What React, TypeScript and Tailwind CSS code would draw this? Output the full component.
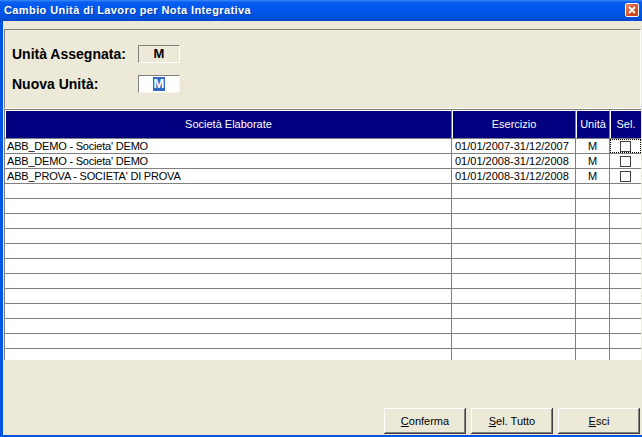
import React from 'react';

const rows = [
  { soc: "ABB_DEMO - Societa' DEMO", es: '01/01/2007-31/12/2007', un: 'M' },
  { soc: "ABB_DEMO - Societa' DEMO", es: '01/01/2008-31/12/2008', un: 'M' },
  { soc: "ABB_PROVA - SOCIETA' DI PROVA", es: '01/01/2008-31/12/2008', un: 'M' },
];

const emptyRows = Array.from({ length: 12 });

const Btn = ({ first, rest }: { first: string; rest: string }) => (
  <button className="w-[82px] h-[26px] bg-[#ECE9D8] text-[11px] text-black shadow-[inset_-1px_-1px_#404040,inset_1px_1px_#ffffff,inset_-2px_-2px_#808080] flex items-center justify-center">
    <span><span className="underline">{first}</span>{rest}</span>
  </button>
);

const Row = ({ soc, es, un, focus }: { soc?: string; es?: string; un?: string; focus?: boolean }) => (
  <div className="flex h-[15px] shrink-0 text-[11px] leading-[14px] text-black bg-white">
    <div className="w-[447px] border-r border-b border-[#808080] pl-[2px] whitespace-nowrap overflow-hidden tracking-[-0.2px]">{soc}</div>
    <div className="w-[124px] border-r border-b border-[#808080] pl-[3px] whitespace-nowrap">{es}</div>
    <div className="w-[34px] border-r border-b border-[#808080] text-center">{un}</div>
    <div className="relative w-[31px] border-b border-[#808080] flex items-center justify-center">
      {un && <div className="w-[11px] h-[11px] border border-[#404040] bg-white" />}
      {focus && <div className="absolute inset-0 border border-dotted border-black" />}
    </div>
  </div>
);

const App: React.FC = () => {
  return (
    <div className="w-[642px] h-[437px] flex flex-col bg-[#0054E3] overflow-hidden" style={{ fontFamily: '"Liberation Sans", Arial, sans-serif' }}>
      {/* Title bar */}
      <div className="h-[21px] shrink-0 flex items-center justify-between pl-[4px] pr-[3px] bg-[linear-gradient(to_bottom,#3d8bf8_0px,#0b5ff0_2px,#0058ee_8px,#0054e3_15px,#0049d0_21px)]">
        <span className="text-white font-bold text-[11px] tracking-[0.4px] [text-shadow:1px_1px_#0a3da8]">Cambio Unità di Lavoro per Nota Integrativa</span>
        <div className="w-[14px] h-[14px] rounded-[2px] border border-white bg-[linear-gradient(135deg,#f08a6a,#d84a22_60%,#c53d18)] flex items-center justify-center mb-[1px]">
          <svg width="8" height="8" viewBox="0 0 8 8">
            <path d="M1 1 L7 7 M7 1 L1 7" stroke="white" strokeWidth="1.8" />
          </svg>
        </div>
      </div>

      {/* Body */}
      <div className="flex-1 flex flex-col ml-[3px] mb-[2px] bg-[#ECE9D8]">
        <div className="h-[8px] shrink-0" />
        {/* Header panel */}
        <div className="ml-[1px] w-[637px] h-[80px] shrink-0 border-t border-l border-[#808080] border-r-white border-b-white border-r border-b flex flex-col pt-[15px] pl-[7px] gap-[12px]">
          <div className="flex items-center h-[18px]">
            <span className="w-[126px] text-[14px] font-bold text-black leading-none">Unità Assegnata:</span>
            <div className="w-[42px] h-[18px] border-t border-l border-[#808080] border-r border-b border-r-white border-b-white bg-[#ECE9D8] flex items-center justify-center text-[13px] font-bold text-black">M</div>
          </div>
          <div className="flex items-center h-[18px]">
            <span className="w-[126px] text-[14px] font-bold text-black leading-none">Nuova Unità:</span>
            <div className="w-[42px] h-[18px] border-t border-l border-[#808080] border-r border-b border-r-[#f4f3ee] border-b-[#f4f3ee] bg-white flex items-center justify-center">
              <span className="bg-[#316AC5] text-white text-[13px] font-bold leading-[14px] px-[1px]">M</span>
            </div>
          </div>
        </div>

        {/* Grid */}
        <div className="ml-[1px] w-[637px] h-[251px] shrink-0 border-t border-l border-[#808080] bg-white flex flex-col overflow-hidden">
          <div className="flex h-[29px] shrink-0 bg-[#000080] text-white text-[11px] border-b border-[#808080]">
            <div className="w-[447px] border-t border-l border-white border-r border-r-[#808080] flex items-center justify-center">Società Elaborate</div>
            <div className="w-[124px] border-t border-l border-white border-r border-r-[#808080] flex items-center justify-center">Esercizio</div>
            <div className="w-[34px] border-t border-l border-white border-r border-r-[#808080] flex items-center justify-center">Unità</div>
            <div className="w-[31px] border-t border-l border-white flex items-center justify-center">Sel.</div>
          </div>
          {rows.map((r, i) => (
            <Row key={i} soc={r.soc} es={r.es} un={r.un} focus={i === 0} />
          ))}
          {emptyRows.map((_, i) => (
            <Row key={'e' + i} />
          ))}
        </div>

        {/* Footer */}
        <div className="flex-1 flex items-end justify-end gap-[5px] pr-[2px] pb-[1px]">
          <Btn first="C" rest="onferma" />
          <Btn first="S" rest="el. Tutto" />
          <Btn first="E" rest="sci" />
        </div>
      </div>
    </div>
  );
};

export default App;
